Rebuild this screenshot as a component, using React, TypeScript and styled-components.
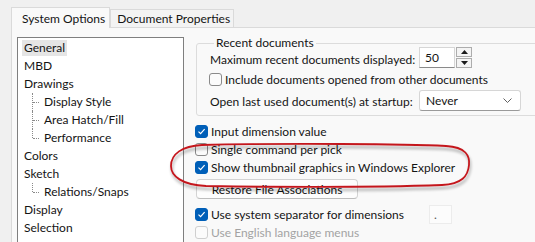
import React from "react";
import styled, { createGlobalStyle } from "styled-components";

const GlobalStyle = createGlobalStyle`
  html, body {
    margin: 0;
    padding: 0;
    background: #f0f0f0;
  }
  * {
    box-sizing: border-box;
  }
`;

const Window = styled.div`
  position: relative;
  width: 535px;
  height: 242px;
  overflow: hidden;
  background: #f0f0f0;
  font-family: Lato, "Segoe UI", sans-serif;
  font-size: 12px;
  color: #141414;
`;

const TabStrip = styled.div`
  display: flex;
  align-items: flex-end;
  height: 27px;
  padding-left: 11px;
`;

const Tab = styled.div<{ $active?: boolean }>`
  height: ${(p) => (p.$active ? 21 : 18)}px;
  padding: ${(p) => (p.$active ? "0 4px 0 10px" : "0 3px 0 6px")};
  display: flex;
  align-items: center;
  background: ${(p) => (p.$active ? "#f9f9f9" : "#f3f3f3")};
  border: 1px solid #dadada;
  border-bottom: none;
  margin-bottom: ${(p) => (p.$active ? "-1px" : "0")};
  position: relative;
  z-index: ${(p) => (p.$active ? 1 : 0)};
  white-space: nowrap;
`;

const Panel = styled.div`
  display: grid;
  grid-template-columns: 167px 1fr;
  column-gap: 11px;
  height: 215px;
  margin-left: 11px;
  padding: 9px 0 0 5px;
  background: #f9f9f9;
  border-top: 1px solid #dadada;
  border-left: 1px solid #dadada;
`;

const Tree = styled.div`
  background: #ffffff;
  border: 1px solid #7f7f7f;
  padding: 1px 0 0 3px;
  height: 240px;
  font-size: 12px;
`;

const TreeRow = styled.div<{ $child?: boolean; $last?: boolean }>`
  position: relative;
  height: 18px;
  display: flex;
  align-items: center;
  padding-left: ${(p) => (p.$child ? 21 : 1)}px;
  white-space: nowrap;

  ${(p) =>
    p.$child &&
    `
    &::before {
      content: "";
      position: absolute;
      left: 11px;
      top: 0;
      height: ${p.$last ? "9px" : "18px"};
      border-left: 1px dotted #8a8a8a;
    }
    &::after {
      content: "";
      position: absolute;
      left: 12px;
      top: 9px;
      width: 6px;
      border-top: 1px dotted #8a8a8a;
    }
  `}
`;

const TreeLabel = styled.span<{ $selected?: boolean }>`
  padding: 0 2px;
  line-height: 16px;
  background: ${(p) => (p.$selected ? "#e5e5e5" : "transparent")};
`;

const Options = styled.div`
  display: flex;
  flex-direction: column;
`;

const Group = styled.fieldset`
  margin: -1px -20px 0 1px;
  padding: 0 0 2px 12px;
  border: 1px solid #dcdcdc;
  border-radius: 3px;
  min-width: 0;
  display: grid;
  grid-template-columns: 210px 1fr;
  align-items: center;
`;

const Legend = styled.legend`
  padding: 0 2px;
  margin-left: 5px;
  line-height: 14px;
`;

const GroupLabel = styled.span`
  padding-left: 1px;
  white-space: nowrap;
`;

const GroupRow = styled.div`
  grid-column: 1 / -1;
  height: 22px;
  display: flex;
  align-items: center;
`;

const Spinner = styled.div`
  display: flex;
  width: 53px;
  height: 21px;
  margin-top: -3px;
`;

const SpinInput = styled.div`
  flex: 1;
  background: #ffffff;
  border: 1px solid #d6d6d6;
  border-bottom-color: #8a8a8a;
  padding-left: 5px;
  display: flex;
  align-items: center;
`;

const SpinButtons = styled.div`
  width: 17px;
  display: flex;
  flex-direction: column;
  gap: 1px;
  padding: 0 0 0 1px;
`;

const SpinButton = styled.div`
  flex: 1;
  border: 1px solid #adadad;
  background: #f4f4f4;
  display: flex;
  align-items: center;
  justify-content: center;
`;

const Select = styled.div`
  width: 102px;
  height: 21px;
  margin: 0 0 2px;
  background: #ffffff;
  border: 1px solid #d6d6d6;
  border-bottom-color: #9a9a9a;
  border-radius: 3px;
  display: flex;
  align-items: center;
  justify-content: space-between;
  padding: 0 8px 0 6px;
`;

const CheckRow = styled.div<{ $disabled?: boolean }>`
  height: 18px;
  display: flex;
  align-items: center;
  gap: 3px;
  white-space: nowrap;
  color: ${(p) => (p.$disabled ? "#a3a3a3" : "inherit")};
`;

const Box = styled.span<{ $checked?: boolean; $disabled?: boolean }>`
  width: 13px;
  height: 13px;
  flex: none;
  border-radius: 3px;
  display: flex;
  align-items: center;
  justify-content: center;
  background: ${(p) => (p.$checked ? "#005fb8" : "#fbfbfb")};
  border: 1px solid
    ${(p) => (p.$checked ? "#005fb8" : p.$disabled ? "#cfcfcf" : "#8a8a8a")};
`;

const OptionList = styled.div`
  display: flex;
  flex-direction: column;
  margin-top: 6px;
`;

const Button = styled.div`
  width: 162px;
  height: 20px;
  margin: 3px 0 6px 1px;
  background: #fdfdfd;
  border: 1px solid #d3d3d3;
  border-bottom-color: #bdbdbd;
  border-radius: 4px;
  display: flex;
  align-items: center;
  justify-content: center;
`;

const SeparatorField = styled.span`
  width: 23px;
  height: 19px;
  margin-left: 22px;
  background: #fcfcfc;
  border: 1px solid #ececec;
  padding-left: 4px;
  line-height: 17px;
  color: #555;
`;

const Highlight = styled.svg`
  position: absolute;
  left: 166px;
  top: 140px;
  pointer-events: none;
`;

const Check = () => (
  <svg width="9" height="9" viewBox="0 0 9 9">
    <polyline
      points="1.5,4.6 3.6,6.6 7.6,2.2"
      fill="none"
      stroke="#ffffff"
      strokeWidth="1.2"
    />
  </svg>
);

const CheckBox = ({
  label,
  checked,
  disabled,
}: {
  label: string;
  checked?: boolean;
  disabled?: boolean;
}) => (
  <CheckRow $disabled={disabled}>
    <Box $checked={checked} $disabled={disabled}>
      {checked && <Check />}
    </Box>
    {label}
  </CheckRow>
);

const tree = [
  { label: "General", selected: true },
  { label: "MBD" },
  { label: "Drawings" },
  { label: "Display Style", child: true },
  { label: "Area Hatch/Fill", child: true },
  { label: "Performance", child: true, last: true },
  { label: "Colors" },
  { label: "Sketch" },
  { label: "Relations/Snaps", child: true, last: true },
  { label: "Display" },
  { label: "Selection" },
  { label: "Performance" },
];

export default function App() {
  return (
    <>
      <GlobalStyle />
      <Window>
        <TabStrip>
          <Tab $active>System Options</Tab>
          <Tab>Document Properties</Tab>
        </TabStrip>
        <Panel>
          <Tree>
            {tree.map((item, i) => (
              <TreeRow key={i} $child={item.child} $last={item.last}>
                <TreeLabel $selected={item.selected}>{item.label}</TreeLabel>
              </TreeRow>
            ))}
          </Tree>
          <Options>
            <Group>
              <Legend>Recent documents</Legend>
              <GroupLabel>Maximum recent documents displayed:</GroupLabel>
              <Spinner>
                <SpinInput>50</SpinInput>
                <SpinButtons>
                  <SpinButton>
                    <svg width="7" height="4" viewBox="0 0 7 4">
                      <polygon points="0,4 3.5,0 7,4" fill="#1a1a1a" />
                    </svg>
                  </SpinButton>
                  <SpinButton>
                    <svg width="7" height="4" viewBox="0 0 7 4">
                      <polygon points="0,0 3.5,4 7,0" fill="#1a1a1a" />
                    </svg>
                  </SpinButton>
                </SpinButtons>
              </Spinner>
              <GroupRow>
                <CheckBox label="Include documents opened from other documents" />
              </GroupRow>
              <GroupLabel>Open last used document(s) at startup:</GroupLabel>
              <Select>
                Never
                <svg width="9" height="5" viewBox="0 0 9 5">
                  <polyline
                    points="0.5,0.5 4.5,4.5 8.5,0.5"
                    fill="none"
                    stroke="#606060"
                    strokeWidth="1"
                  />
                </svg>
              </Select>
            </Group>
            <OptionList>
              <CheckBox label="Input dimension value" checked />
              <CheckBox label="Single command per pick" />
              <CheckBox label="Show thumbnail graphics in Windows Explorer" checked />
              <Button>Restore File Associations</Button>
              <CheckRow>
                <Box $checked>
                  <Check />
                </Box>
                Use system separator for dimensions
                <SeparatorField>.</SeparatorField>
              </CheckRow>
              <CheckBox label="Use English language menus" disabled />
            </OptionList>
          </Options>
        </Panel>
        <Highlight width="312" height="54" viewBox="0 0 312 54">
          <defs>
            <filter id="shadow" x="-10%" y="-30%" width="120%" height="170%">
              <feGaussianBlur in="SourceAlpha" stdDeviation="1.6" />
              <feOffset dx="1" dy="3" result="blur" />
              <feComponentTransfer>
                <feFuncA type="linear" slope="0.35" />
              </feComponentTransfer>
              <feMerge>
                <feMergeNode />
                <feMergeNode in="SourceGraphic" />
              </feMerge>
            </filter>
          </defs>
          <path
            d="M 36 5 C 120 3, 240 4, 280 6 C 300 7, 304 16, 303 25 C 302 36, 296 44, 276 45 C 220 47, 110 47, 40 46 C 16 45, 5 36, 5 26 C 5 14, 16 6, 36 5 Z"
            fill="none"
            stroke="#c4161c"
            strokeWidth="1.8"
            filter="url(#shadow)"
          />
        </Highlight>
      </Window>
    </>
  );
}
